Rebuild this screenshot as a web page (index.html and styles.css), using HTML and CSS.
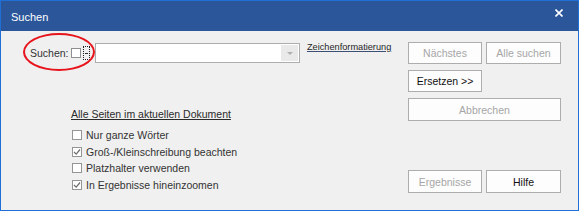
FILE: index.html
```html
<!DOCTYPE html>
<html lang="de">
<head>
<meta charset="utf-8">
<title>Suchen</title>
<link rel="stylesheet" href="styles.css">
</head>
<body>
<div class="window">
  <div class="titlebar">
    <span class="title">Suchen</span>
    <svg class="close" width="8" height="8" viewBox="0 0 8 8"><path d="M0.5 0.5 L7.5 7.5 M7.5 0.5 L0.5 7.5" stroke="#fff" stroke-width="1.6"/></svg>
  </div>
  <div class="body">
    <div class="left">
      <div class="search-row">
        <span class="label">Suchen:</span>
        <span class="tiny-check"></span>
        <span class="focus-box"><span class="dash"></span></span>
        <span class="combo"><span class="combo-btn"><span class="arrow"></span></span></span>
        <span class="link">Zeichenformatierung</span>
      </div>
      <div class="options">
        <div class="scope">Alle Seiten im aktuellen Dokument</div>
        <div class="check-row"><span class="box"></span><span>Nur ganze Wörter</span></div>
        <div class="check-row"><span class="box checked"><svg width="8" height="8" viewBox="0 0 8 8"><path d="M1 4 L3.2 6.2 L7 1.5" fill="none" stroke="#6d6d6d" stroke-width="1.2"/></svg></span><span>Groß-/Kleinschreibung beachten</span></div>
        <div class="check-row"><span class="box"></span><span>Platzhalter verwenden</span></div>
        <div class="check-row"><span class="box checked"><svg width="8" height="8" viewBox="0 0 8 8"><path d="M1 4 L3.2 6.2 L7 1.5" fill="none" stroke="#6d6d6d" stroke-width="1.2"/></svg></span><span>In Ergebnisse hineinzoomen</span></div>
      </div>
    </div>
    <div class="right">
      <div class="btn-grid">
        <span class="btn disabled">Nächstes</span>
        <span class="btn disabled">Alle suchen</span>
        <span class="btn">Ersetzen &gt;&gt;</span>
        <span class="spacer"></span>
        <span class="btn disabled wide">Abbrechen</span>
      </div>
      <div class="btn-bottom">
        <span class="btn disabled tall">Ergebnisse</span>
        <span class="btn tall">Hilfe</span>
      </div>
    </div>
  </div>
  <div class="annotation"></div>
</div>
</body>
</html>
```
FILE: styles.css
```css
html, body {
  margin: 0;
  padding: 0;
}
body {
  font-family: "Liberation Sans", Arial, sans-serif;
  font-size: 10.5px;
  color: #333;
}
.window {
  position: relative;
  width: 579px;
  height: 211px;
  box-sizing: border-box;
  border: 1px solid #1f6fd6;
  background: #f0f0f0;
  display: flex;
  flex-direction: column;
}
.titlebar {
  height: 30px;
  background: #2b579a;
  display: flex;
  align-items: center;
  justify-content: space-between;
  padding: 0 15px 0 10px;
  flex: none;
}
.title {
  color: #fff;
  font-size: 11px;
  margin-top: 1px;
}
.close {
  margin-top: -7px;
}
.body {
  flex: 1;
  display: grid;
  grid-template-columns: 1fr 153px;
  column-gap: 11px;
  padding: 11px 17px 17px 29px;
}
.left {
  display: flex;
  flex-direction: column;
}
.search-row {
  display: flex;
  align-items: center;
  height: 22px;
}
.label {
  width: 41px;
}
.tiny-check {
  width: 10px;
  height: 10px;
  box-sizing: border-box;
  border: 1px solid #8f8f8f;
  background: #fff;
}
.focus-box {
  width: 7px;
  height: 14px;
  box-sizing: border-box;
  border: 1px dotted #202020;
  margin-left: 2px;
  display: flex;
  align-items: center;
  justify-content: center;
}
.dash {
  width: 3px;
  height: 1px;
  background: #303030;
}
.combo {
  width: 205px;
  height: 20px;
  box-sizing: border-box;
  border: 1px solid #adadad;
  background: #fff;
  margin-left: 5px;
  display: flex;
  justify-content: flex-end;
  padding: 1px;
}
.combo-btn {
  width: 17px;
  background: #e9e9e9;
  display: flex;
  align-items: center;
  justify-content: center;
}
.arrow {
  width: 0;
  height: 0;
  border-left: 3px solid transparent;
  border-right: 3px solid transparent;
  border-top: 3px solid #b0b0b0;
}
.link {
  align-self: flex-start;
  margin-left: 7px;
  font-size: 9.2px;
  color: #262626;
  text-decoration: underline;
  text-decoration-color: #3d4f75;
  line-height: 11px;
}
.options {
  margin-top: 44px;
  margin-left: 41px;
}
.scope {
  text-decoration: underline;
  color: #2a2a2a;
  line-height: 12px;
  margin-bottom: 7px;
}
.check-row {
  display: flex;
  align-items: center;
  height: 16.5px;
  margin-left: 1px;
}
.box {
  width: 10px;
  height: 10px;
  box-sizing: border-box;
  border: 1px solid #959595;
  background: #fff;
  margin-right: 4px;
  display: flex;
  align-items: center;
  justify-content: center;
}
.right {
  display: flex;
  flex-direction: column;
  justify-content: space-between;
}
.btn-grid {
  display: grid;
  grid-template-columns: 74px 75px;
  grid-template-rows: 22px 22px 23px;
  gap: 6px 4px;
}
.btn {
  box-sizing: border-box;
  border: 1px solid #adadad;
  background: #fdfdfd;
  display: flex;
  align-items: center;
  justify-content: center;
  color: #111;
}
.btn.disabled {
  color: #a6a6a6;
}
.btn.wide {
  grid-column: 1 / 3;
}
.btn-bottom {
  display: grid;
  grid-template-columns: 74px 75px;
  gap: 4px;
  height: 23px;
}
.annotation {
  position: absolute;
  left: 22px;
  top: 32px;
  width: 72px;
  height: 38px;
  box-sizing: border-box;
  border: 2px solid #e8141c;
  border-radius: 50%;
}
```
